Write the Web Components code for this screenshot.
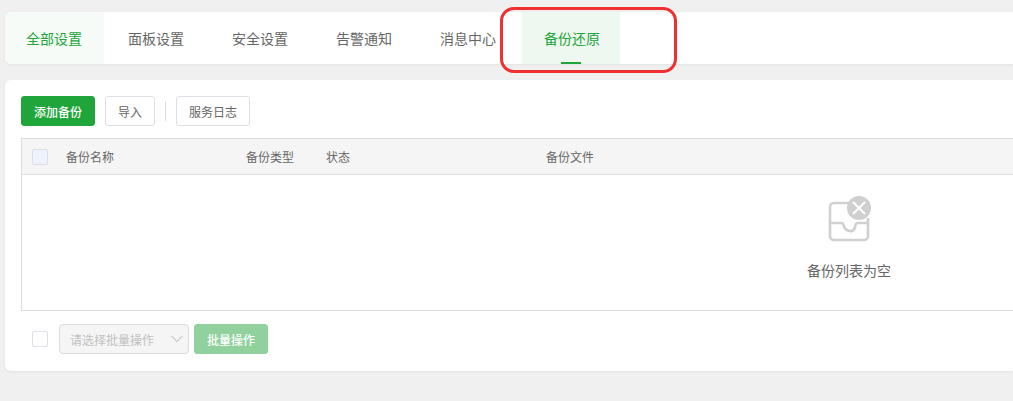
<!DOCTYPE html>
<html lang="zh"><head><meta charset="utf-8">
<style>
html,body{margin:0;height:401px;overflow:hidden;background:#f0f0f0}
body{font-family:"Noto Sans CJK SC","Liberation Sans",sans-serif;color:#666;position:relative}
</style></head><body>
<template id="t-page"><style>
:host{display:flex;flex-direction:column;gap:16px;padding:12px 0 0 5px;width:1013px;box-sizing:border-box}
</style><slot></slot></template>

<template id="t-tabs"><style>
:host{display:flex;height:52px;background:#fff;border-radius:6px 0 0 6px;box-shadow:0 1px 3px rgba(0,0,0,.06);overflow:hidden}
</style><slot></slot></template>

<template id="t-tab"><style>
:host{display:block;position:relative;flex:none;width:104px;padding-left:24px;box-sizing:border-box;font-size:14px;line-height:52px;color:#666}
:host([first]){width:99px;padding-left:21px;background:#f6fbf7;color:#20a53a}
:host([active]){margin-left:2px;width:98px;padding-left:22px;background:#eff7f1;color:#20a53a}
:host([active])::after{content:"";position:absolute;left:39px;bottom:0;width:20px;height:2px;background:#20a53a}
</style><slot></slot></template>

<template id="t-panel"><style>
:host{display:flex;flex-direction:column;height:291px;background:#fff;border-radius:6px 0 0 6px;box-shadow:0 1px 3px rgba(0,0,0,.06);padding:16px 0 16px 16px;box-sizing:border-box}
</style><slot></slot></template>

<template id="t-toolbar"><style>
:host{display:flex;align-items:center;height:30px;gap:10px;margin-bottom:12px}
::slotted(.sep){width:1px;height:20px;background:#ddd}
</style><slot></slot></template>

<template id="t-btn"><style>
:host{display:inline-flex;align-items:center;justify-content:center;height:30px;box-sizing:border-box;padding:0 12px;font-size:12px;border:1px solid #dcdfe6;border-radius:3px;background:#fff;color:#666}
:host([primary]){background:#20a53a;border-color:#20a53a;color:#fff;font-weight:500}
:host([disabled]){background:#90d19d;border-color:#90d19d;color:#fff;font-weight:500}
</style><slot></slot></template>

<template id="t-table"><style>
:host{display:block;border:1px solid #ddd;border-right:0;box-sizing:border-box;height:173px}
.head{display:flex;align-items:center;height:35px;background:#f5f5f5;border-bottom:1px solid #ddd;font-size:12px;color:#666;padding-left:10px}
.box{width:16px;height:16px;border:1px solid #dcdfe6;background:#edf2fc;border-radius:2px;margin-right:18px;box-sizing:border-box}
.c{flex:none}
.empty{display:flex;flex-direction:column;align-items:center;width:84px;margin-left:785px;padding-top:21px;font-size:14px;color:#666;white-space:nowrap}
svg{display:block;margin-bottom:16px;margin-left:4px}
</style>
<div class="head"><div class="box"></div><div class="c" style="width:180px">备份名称</div><div class="c" style="width:80px">备份类型</div><div class="c" style="width:220px">状态</div><div class="c">备份文件</div></div>
<div class="empty"><svg width="46" height="48" viewBox="0 0 46 48" fill="none">
<path d="M28 7H6a4 4 0 0 0-4 4v29a4 4 0 0 0 4 4h30a4 4 0 0 0 4-4V22" stroke="#d0d0d0" stroke-width="2.6"/>
<path d="M2 27h11q2 0 2.500 2 1 5 6 6t6-6q.5-2 2.500-2h10" stroke="#d0d0d0" stroke-width="2.600"/>
<circle cx="31" cy="12" r="12" fill="#cfcfcf"/><path d="M25 6l12 12m0-12L25 18" stroke="#fff" stroke-width="2.200"/></svg>
<slot></slot></div></template>

<template id="t-batch"><style>
:host{display:flex;align-items:center;height:30px;margin-top:13px;padding-left:11px}
.box{width:16px;height:16px;border:1px solid #dcdfe6;border-radius:2px;box-sizing:border-box;margin-right:11px}
.sel{width:130px;height:30px;box-sizing:border-box;border:1px solid #ddd;border-radius:4px;background:#f5f5f5;color:#c0c0c0;font-size:12px;padding-left:10px;display:flex;align-items:center;justify-content:space-between;margin-right:5px}
svg{margin-right:5px}
</style><div class="box"></div><div class="sel"><span>请选择批量操作</span><svg width="12" height="8" viewBox="0 0 12 8" fill="none"><path d="M.5 1l5.500 5.500L11.500 1" stroke="#cfcfcf" stroke-width="1.300"/></svg></div><slot></slot></template>

<template id="t-mark"><style>
:host{position:absolute;left:500px;top:7px;width:177px;height:66px;box-sizing:border-box;border:3px solid #f03030;border-radius:14px;pointer-events:none}
</style></template>

<bt-page>
<bt-tabs><bt-tab first>全部设置</bt-tab><bt-tab>面板设置</bt-tab><bt-tab>安全设置</bt-tab><bt-tab>告警通知</bt-tab><bt-tab>消息中心</bt-tab><bt-tab active>备份还原</bt-tab></bt-tabs>
<bt-panel>
<bt-toolbar><bt-btn primary>添加备份</bt-btn><bt-btn>导入</bt-btn><div class="sep"></div><bt-btn>服务日志</bt-btn></bt-toolbar>
<bt-table>备份列表为空</bt-table>
<bt-batch><bt-btn disabled>批量操作</bt-btn></bt-batch>
</bt-panel>
</bt-page>
<bt-mark></bt-mark>
<script>
const map={'bt-page':'t-page','bt-tabs':'t-tabs','bt-tab':'t-tab','bt-panel':'t-panel','bt-toolbar':'t-toolbar','bt-btn':'t-btn','bt-table':'t-table','bt-batch':'t-batch','bt-mark':'t-mark'};
for(const [n,id] of Object.entries(map)){
customElements.define(n,class extends HTMLElement{constructor(){super();this.attachShadow({mode:'open'}).appendChild(document.getElementById(id).content.cloneNode(true));}});
}
</script>
</body></html>
